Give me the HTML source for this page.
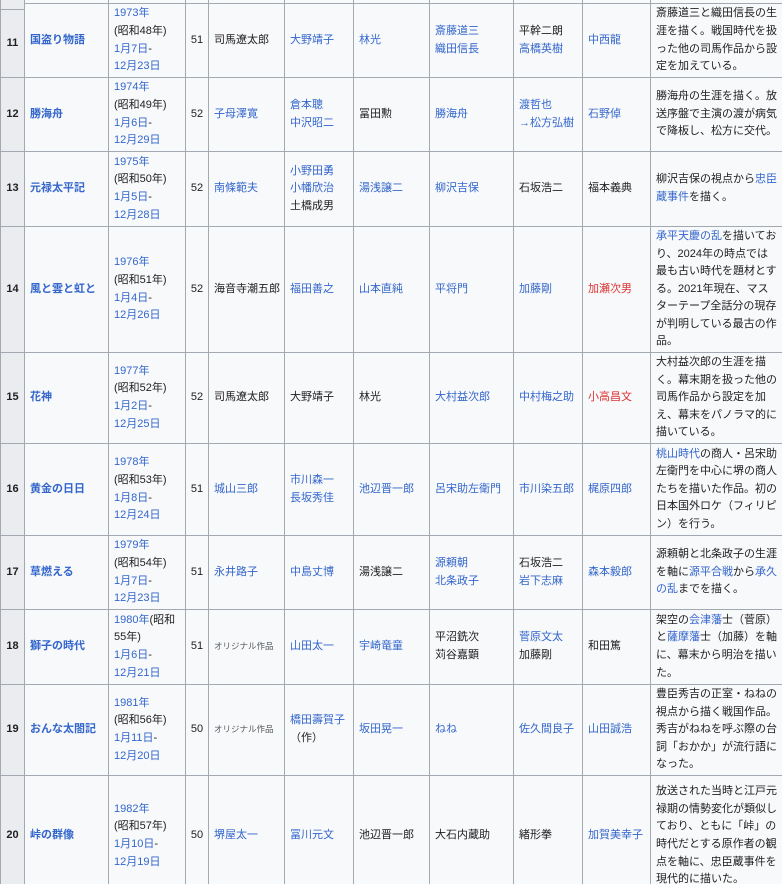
<!DOCTYPE html>
<html><head><meta charset="utf-8"><style>
html,body{margin:0;padding:0;width:782px;height:884px;overflow:hidden;background:#fff}
body{position:relative;font-family:"Liberation Sans","Noto Sans CJK JP",sans-serif;font-size:11px;line-height:17.6px;color:#202122}
.c{position:absolute;box-sizing:border-box;border:1px solid #a2a9b1;background:#f8f9fa;display:flex;align-items:center;padding:0 5px;white-space:nowrap;overflow:hidden}
.c1{left:0;width:25px;background:#eaecf0;justify-content:center;font-weight:bold}
.c2{left:24px;width:85px;font-weight:bold}
.c3{left:108px;width:78px}
.c4{left:185px;width:24px;justify-content:center;padding:0}
.c5{left:208px;width:77px}
.c6{left:284px;width:70px}
.c7{left:353px;width:77px}
.c8{left:429px;width:85px}
.c9{left:513px;width:70px}
.c10{left:582px;width:69px}
.c11{left:650px;width:140px}
.r0{top:-72px;height:76px}
.r11{top:3px;height:75px}
.r12{top:77px;height:75px}
.r13{top:151px;height:76px}
.r14{top:226px;height:127px}
.r15{top:352px;height:92px}
.r16{top:443px;height:93px}
.r17{top:535px;height:75px}
.r18{top:609px;height:76px}
.r19{top:684px;height:92px}
.r20{top:775px;height:122px}
a{color:#3366cc;text-decoration:none}
a.new{color:#d33}
.o{font-size:8.5px;color:#54595d}
</style></head><body>
<div class="c c1 r0" style="height:82px"></div><div class="c c2 r0"></div><div class="c c3 r0"></div><div class="c c4 r0"></div><div class="c c5 r0"></div><div class="c c6 r0"></div><div class="c c7 r0"></div><div class="c c8 r0"></div><div class="c c9 r0"></div><div class="c c10 r0"></div><div class="c c11 r0"></div>

<div class="c c1 r11" style="top:9px;height:69px">11</div>
<div class="c c2 r11"><a>国盗り物語</a></div>
<div class="c c3 r11"><div><a>1973年</a><br>(昭和48年)<br><a>1月7日</a>-<br><a>12月23日</a></div></div>
<div class="c c4 r11">51</div>
<div class="c c5 r11">司馬遼太郎</div>
<div class="c c6 r11"><a>大野靖子</a></div>
<div class="c c7 r11"><a>林光</a></div>
<div class="c c8 r11"><div><a>斎藤道三</a><br><a>織田信長</a></div></div>
<div class="c c9 r11"><div>平幹二朗<br><a>高橋英樹</a></div></div>
<div class="c c10 r11"><a>中西龍</a></div>
<div class="c c11 r11"><div>斎藤道三と織田信長の生<br>涯を描く。戦国時代を扱<br>った他の司馬作品から設<br>定を加えている。</div></div>

<div class="c c1 r12">12</div>
<div class="c c2 r12"><a>勝海舟</a></div>
<div class="c c3 r12"><div><a>1974年</a><br>(昭和49年)<br><a>1月6日</a>-<br><a>12月29日</a></div></div>
<div class="c c4 r12">52</div>
<div class="c c5 r12"><a>子母澤寛</a></div>
<div class="c c6 r12"><div><a>倉本聰</a><br><a>中沢昭二</a></div></div>
<div class="c c7 r12">冨田勲</div>
<div class="c c8 r12"><a>勝海舟</a></div>
<div class="c c9 r12"><div><a>渡哲也</a><br><a>→松方弘樹</a></div></div>
<div class="c c10 r12"><a>石野倬</a></div>
<div class="c c11 r12"><div>勝海舟の生涯を描く。放<br>送序盤で主演の渡が病気<br>で降板し、松方に交代。</div></div>

<div class="c c1 r13">13</div>
<div class="c c2 r13"><a>元禄太平記</a></div>
<div class="c c3 r13"><div><a>1975年</a><br>(昭和50年)<br><a>1月5日</a>-<br><a>12月28日</a></div></div>
<div class="c c4 r13">52</div>
<div class="c c5 r13"><a>南條範夫</a></div>
<div class="c c6 r13"><div><a>小野田勇</a><br><a>小幡欣治</a><br>土橋成男</div></div>
<div class="c c7 r13"><a>湯浅譲二</a></div>
<div class="c c8 r13"><a>柳沢吉保</a></div>
<div class="c c9 r13">石坂浩二</div>
<div class="c c10 r13">福本義典</div>
<div class="c c11 r13"><div>柳沢吉保の視点から<a>忠臣</a><br><a>蔵事件</a>を描く。</div></div>

<div class="c c1 r14">14</div>
<div class="c c2 r14"><a>風と雲と虹と</a></div>
<div class="c c3 r14"><div><a>1976年</a><br>(昭和51年)<br><a>1月4日</a>-<br><a>12月26日</a></div></div>
<div class="c c4 r14">52</div>
<div class="c c5 r14">海音寺潮五郎</div>
<div class="c c6 r14"><a>福田善之</a></div>
<div class="c c7 r14"><a>山本直純</a></div>
<div class="c c8 r14"><a>平将門</a></div>
<div class="c c9 r14"><a>加藤剛</a></div>
<div class="c c10 r14"><a class="new">加瀬次男</a></div>
<div class="c c11 r14"><div><a>承平天慶の乱</a>を描いてお<br>り、2024年の時点では<br>最も古い時代を題材とす<br>る。2021年現在、マス<br>ターテープ全話分の現存<br>が判明している最古の作<br>品。</div></div>

<div class="c c1 r15">15</div>
<div class="c c2 r15"><a>花神</a></div>
<div class="c c3 r15"><div><a>1977年</a><br>(昭和52年)<br><a>1月2日</a>-<br><a>12月25日</a></div></div>
<div class="c c4 r15">52</div>
<div class="c c5 r15">司馬遼太郎</div>
<div class="c c6 r15">大野靖子</div>
<div class="c c7 r15">林光</div>
<div class="c c8 r15"><a>大村益次郎</a></div>
<div class="c c9 r15"><a>中村梅之助</a></div>
<div class="c c10 r15"><a class="new">小高昌文</a></div>
<div class="c c11 r15"><div>大村益次郎の生涯を描<br>く。幕末期を扱った他の<br>司馬作品から設定を加<br>え、幕末をパノラマ的に<br>描いている。</div></div>

<div class="c c1 r16">16</div>
<div class="c c2 r16"><a>黄金の日日</a></div>
<div class="c c3 r16"><div><a>1978年</a><br>(昭和53年)<br><a>1月8日</a>-<br><a>12月24日</a></div></div>
<div class="c c4 r16">51</div>
<div class="c c5 r16"><a>城山三郎</a></div>
<div class="c c6 r16"><div><a>市川森一</a><br><a>長坂秀佳</a></div></div>
<div class="c c7 r16"><a>池辺晋一郎</a></div>
<div class="c c8 r16"><a>呂宋助左衛門</a></div>
<div class="c c9 r16"><a>市川染五郎</a></div>
<div class="c c10 r16"><a>梶原四郎</a></div>
<div class="c c11 r16"><div><a>桃山時代</a>の商人・呂宋助<br>左衛門を中心に堺の商人<br>たちを描いた作品。初の<br>日本国外ロケ（フィリピ<br>ン）を行う。</div></div>

<div class="c c1 r17">17</div>
<div class="c c2 r17"><a>草燃える</a></div>
<div class="c c3 r17"><div><a>1979年</a><br>(昭和54年)<br><a>1月7日</a>-<br><a>12月23日</a></div></div>
<div class="c c4 r17">51</div>
<div class="c c5 r17"><a>永井路子</a></div>
<div class="c c6 r17"><a>中島丈博</a></div>
<div class="c c7 r17">湯浅譲二</div>
<div class="c c8 r17"><div><a>源頼朝</a><br><a>北条政子</a></div></div>
<div class="c c9 r17"><div>石坂浩二<br><a>岩下志麻</a></div></div>
<div class="c c10 r17"><a>森本毅郎</a></div>
<div class="c c11 r17"><div>源頼朝と北条政子の生涯<br>を軸に<a>源平合戦</a>から<a>承久</a><br><a>の乱</a>までを描く。</div></div>

<div class="c c1 r18">18</div>
<div class="c c2 r18"><a>獅子の時代</a></div>
<div class="c c3 r18"><div><a>1980年</a>(昭和<br>55年)<br><a>1月6日</a>-<br><a>12月21日</a></div></div>
<div class="c c4 r18">51</div>
<div class="c c5 r18"><span class="o">オリジナル作品</span></div>
<div class="c c6 r18"><a>山田太一</a></div>
<div class="c c7 r18"><a>宇崎竜童</a></div>
<div class="c c8 r18"><div>平沼銑次<br>苅谷嘉顕</div></div>
<div class="c c9 r18"><div><a>菅原文太</a><br>加藤剛</div></div>
<div class="c c10 r18">和田篤</div>
<div class="c c11 r18"><div>架空の<a>会津藩</a>士（菅原）<br>と<a>薩摩藩</a>士（加藤）を軸<br>に、幕末から明治を描い<br>た。</div></div>

<div class="c c1 r19">19</div>
<div class="c c2 r19"><a>おんな太閤記</a></div>
<div class="c c3 r19"><div><a>1981年</a><br>(昭和56年)<br><a>1月11日</a>-<br><a>12月20日</a></div></div>
<div class="c c4 r19">50</div>
<div class="c c5 r19"><span class="o">オリジナル作品</span></div>
<div class="c c6 r19"><div><a>橋田壽賀子</a><br>（作）</div></div>
<div class="c c7 r19"><a>坂田晃一</a></div>
<div class="c c8 r19"><a>ねね</a></div>
<div class="c c9 r19"><a>佐久間良子</a></div>
<div class="c c10 r19"><a>山田誠浩</a></div>
<div class="c c11 r19"><div>豊臣秀吉の正室・ねねの<br>視点から描く戦国作品。<br>秀吉がねねを呼ぶ際の台<br>詞「おかか」が流行語に<br>なった。</div></div>

<div class="c c1 r20">20</div>
<div class="c c2 r20"><a>峠の群像</a></div>
<div class="c c3 r20"><div><a>1982年</a><br>(昭和57年)<br><a>1月10日</a>-<br><a>12月19日</a></div></div>
<div class="c c4 r20">50</div>
<div class="c c5 r20"><a>堺屋太一</a></div>
<div class="c c6 r20"><a>冨川元文</a></div>
<div class="c c7 r20">池辺晋一郎</div>
<div class="c c8 r20">大石内蔵助</div>
<div class="c c9 r20">緒形拳</div>
<div class="c c10 r20"><a>加賀美幸子</a></div>
<div class="c c11 r20"><div>放送された当時と江戸元<br>禄期の情勢変化が類似し<br>ており、ともに「峠」の<br>時代だとする原作者の観<br>点を軸に、忠臣蔵事件を<br>現代的に描いた。</div></div>
</body></html>
